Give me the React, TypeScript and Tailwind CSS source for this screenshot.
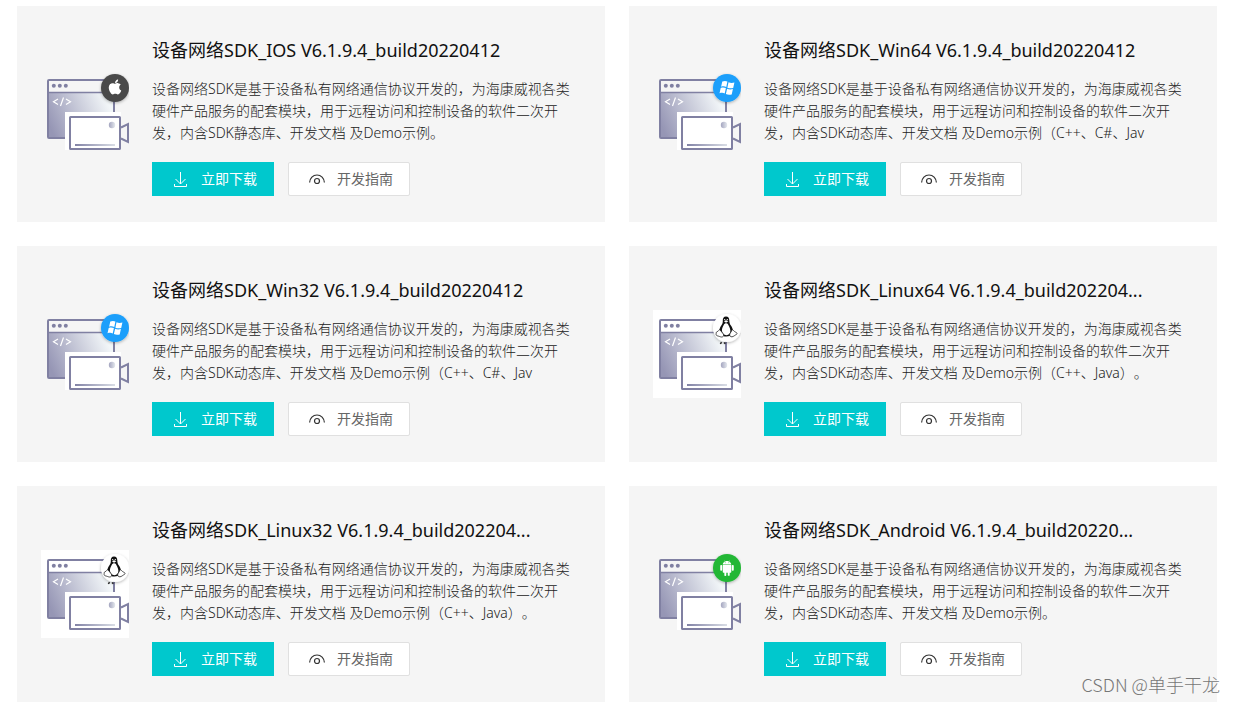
import React, { useId } from 'react';
import { FaApple } from 'react-icons/fa';
import { AiFillAndroid } from 'react-icons/ai';

type Platform = 'ios' | 'windows' | 'linux' | 'android';

const badgeColors: Record<Platform, string> = {
  ios: '#4a4a4a',
  windows: '#1b9ffb',
  linux: '#ffffff',
  android: '#22b735',
};

const intro =
  '设备网络SDK是基于设备私有网络通信协议开发的，为海康威视各类硬件产品服务的配套模块，用于远程访问和控制设备的软件二次开发，';

const sdks: { title: string; platform: Platform; text: string }[] = [
  {
    title: '设备网络SDK_IOS V6.1.9.4_build20220412',
    platform: 'ios',
    text: '内含SDK静态库、开发文档 及Demo示例。',
  },
  {
    title: '设备网络SDK_Win64 V6.1.9.4_build20220412',
    platform: 'windows',
    text: '内含SDK动态库、开发文档 及Demo示例（C++、C#、Jav',
  },
  {
    title: '设备网络SDK_Win32 V6.1.9.4_build20220412',
    platform: 'windows',
    text: '内含SDK动态库、开发文档 及Demo示例（C++、C#、Jav',
  },
  {
    title: '设备网络SDK_Linux64 V6.1.9.4_build202204...',
    platform: 'linux',
    text: '内含SDK动态库、开发文档 及Demo示例（C++、Java）。',
  },
  {
    title: '设备网络SDK_Linux32 V6.1.9.4_build202204...',
    platform: 'linux',
    text: '内含SDK动态库、开发文档 及Demo示例（C++、Java）。',
  },
  {
    title: '设备网络SDK_Android V6.1.9.4_build20220...',
    platform: 'android',
    text: '内含SDK动态库、开发文档 及Demo示例。',
  },
];

const Logo = ({ platform }: { platform: Platform }) => {
  if (platform === 'ios') {
    return <FaApple x="65.5" y="14.5" size={17} color="#fff" />;
  }
  if (platform === 'android') {
    return <AiFillAndroid x="65" y="15" size={18} color="#fff" />;
  }
  if (platform === 'linux') {
    return (
      <g>
        <path
          d="M73 12.500c-2.400 0-3.300 1.700-3.200 4 .1 2.300-.3 3.300-1.500 5-1.200 1.800-2 3.600-2 5.500 0 2.800 2.200 5.500 7.200 5.500 4.800 0 6.500-2.500 6.500-5.200 0-2-.9-4-2.100-5.700-1.100-1.600-1.500-2.900-1.600-5.200-.1-2.400-1-3.900-3.300-3.900z"
          fill="#111"
        />
        <path
          d="M72.500 19.200c-1.200.4-1.700 1.600-2.300 2.900-.8 1.700-1.500 3.100-1.200 5 .3 2.300 2 4.200 4.400 4.200 2.400 0 4-1.900 4-4.200 0-1.700-.7-3.300-1.500-5-.6-1.400-1-3.300-3.400-2.900z"
          fill="#fff"
        />
        <path d="M71 17.300l2-1 2.300 1-2.300 1.400z" fill="#fff" />
        <circle cx="71.700" cy="15.600" r="0.700" fill="#fff" />
        <circle cx="74.300" cy="15.600" r="0.700" fill="#fff" />
        <path
          d="M66.700 25.500c-.9.500-.9 1.600-2.600 2.200-1.300.5-.8 1.500-1 2.600-.2 1 .8 1.500 2.200 1.800 1.600.4 2.900 1.300 4.300.7 1.400-.6 1.300-2 .3-3.400z"
          fill="#fff"
          stroke="#222"
          strokeWidth="0.800"
        />
        <path
          d="M79.400 25.500c.8.500 1.500 1.800 3 2.500 1.700.7 2.300 1.700 1 2.400-1.500.8-2.800 2.200-4.400 2.400-1.600.2-2.500-.9-2.300-2.700z"
          fill="#fff"
          stroke="#222"
          strokeWidth="0.800"
        />
        <path d="M68.600 38.200l-1.300 1.700M71 38.500l1.300 1.200" stroke="#222" strokeWidth="1.500" />
      </g>
    );
  }
  return (
    <g fill="#fff">
      <path d="M69.300 17.500c1.800-.7 3.500-.7 5.100 0l-1.100 5.400c-1.700-.7-3.500-.7-5.200-.2z" />
      <path d="M75.500 18.200c1.800.8 3.700.9 5.900.3l-1.200 5.400c-2 .6-3.900.5-5.800-.2z" />
      <path d="M67.700 23.900c1.800-.6 3.500-.6 5.200.1l-1.200 5.400c-1.600-.7-3.400-.7-5.200-.1z" />
      <path d="M74.100 24.700c1.800.8 3.700.9 5.800.3l-1.200 5.400c-2 .6-3.900.5-5.800-.3z" />
    </g>
  );
};

const SdkIcon = ({ platform }: { platform: Platform }) => {
  const id = useId();
  return (
    <svg
      width="88"
      height="88"
      viewBox="0 6 88 88"
      fill="none"
      aria-hidden="true"
      className={platform === 'linux' ? 'shrink-0 bg-white' : 'shrink-0'}
    >
      <defs>
        <linearGradient id={`${id}body`} x1="0" y1="0.65" x2="1" y2="0.35">
          <stop offset="0" stopColor="#9696b5" />
          <stop offset="0.45" stopColor="#c2c4d5" />
          <stop offset="0.95" stopColor="#f2f6f8" />
        </linearGradient>
        <linearGradient id={`${id}line`} x1="34" y1="0" x2="74" y2="0" gradientUnits="userSpaceOnUse">
          <stop offset="0" stopColor="#8283a6" />
          <stop offset="1" stopColor="#d9dde5" />
        </linearGradient>
        <linearGradient id={`${id}lens`}>
          <stop offset="0" stopColor="#a3a4bf" />
          <stop offset="1" stopColor="#e4e8ed" />
        </linearGradient>
        <filter id={`${id}shadow`} x="-30%" y="-30%" width="160%" height="160%">
          <feDropShadow dx="0" dy="1" stdDeviation="1.500" floodOpacity="0.3" />
        </filter>
      </defs>
      <path d="M7 29h66v45H7z" fill={`url(#${id}body)`} />
      <rect x="7" y="16" width="66" height="58" rx="1" stroke="#8080a2" strokeWidth="2" />
      <path d="M7 28.500h66" stroke="#8080a2" strokeWidth="1.500" />
      <circle cx="12.800" cy="21.800" r="2" fill="#8080a2" />
      <circle cx="18.800" cy="21.800" r="2" fill="#8080a2" />
      <circle cx="24.800" cy="21.800" r="2" fill="#8080a2" />
      <path d="M17 35l-4.500 2.700 4.500 2.700M25 35l4.500 2.700-4.500 2.700M22.500 33.500l-3 8.500" stroke="#fff" strokeWidth="1.200" />
      <path d="M24 48h56v38H24z" fill="#fff" />
      <rect x="29" y="53" width="50" height="32" rx="0.500" fill="#fff" stroke="#8080a2" strokeWidth="2" />
      <path d="M80 63.500l7-3.500v18l-7-3.500" stroke="#8080a2" strokeWidth="2" />
      <circle cx="71" cy="61" r="3.200" fill={`url(#${id}lens)`} />
      <path d="M34 80h40v2H34z" fill={`url(#${id}line)`} />
      <circle cx="74" cy="24" r="14" fill={badgeColors[platform]} filter={`url(#${id}shadow)`} />
      <Logo platform={platform} />
    </svg>
  );
};

const SdkCard = ({ title, platform, text }: { title: string; platform: Platform; text: string }) => (
  <article className="flex items-center bg-[#f5f5f5] px-6">
    <SdkIcon platform={platform} />
    <div className="min-w-0 flex-1 pt-[30px] pb-[26px] pl-[23px]">
      <h2 className="text-lg leading-7 text-[#111]">{title}</h2>
      <p className="mt-3.5 text-sm leading-[22px] font-light text-[#222]">{intro + text}</p>
      <div className="mt-[18px] flex gap-3.5">
        <button
          type="button"
          className="flex h-[34px] w-[122px] items-center justify-center gap-3 bg-[#00c8cd] pl-1 text-sm text-white"
        >
          <svg width="16" height="16" viewBox="0 0 16 16" fill="none" stroke="currentColor" aria-hidden="true">
            <path d="M7.500 1v12M2.500 8l5 5 5-5M1.500 13v2.500h12V13" />
          </svg>
          立即下载
        </button>
        <button
          type="button"
          className="flex h-[34px] w-[122px] items-center justify-center gap-3 rounded-xs border border-[#e0e0e0] bg-white pl-1 text-sm text-[#666]"
        >
          <svg width="16" height="16" viewBox="0 0 16 16" fill="none" stroke="#333" strokeWidth="1.200" aria-hidden="true">
            <path d="M.6 11.500C.8 7 4 4 8 4s7.200 3 7.400 7.500" />
            <circle cx="8" cy="10" r="2.500" />
          </svg>
          开发指南
        </button>
      </div>
    </div>
  </article>
);

const App = () => {
  return (
    <main
      lang="zh-CN"
      className="relative bg-white px-[17px] pt-1.5 font-['Noto_Sans','Noto_Sans_CJK_SC',sans-serif] [text-spacing-trim:space-all]"
    >
      <div className="grid grid-cols-2 gap-6">
        {sdks.map((sdk) => (
          <SdkCard key={sdk.title} {...sdk} />
        ))}
      </div>
      <span className="absolute right-3.5 bottom-1.5 font-['Noto_Sans_CJK_SC',sans-serif] text-lg leading-6 font-light text-[#777]">
        CSDN @单手干龙
      </span>
    </main>
  );
};

export default App;
